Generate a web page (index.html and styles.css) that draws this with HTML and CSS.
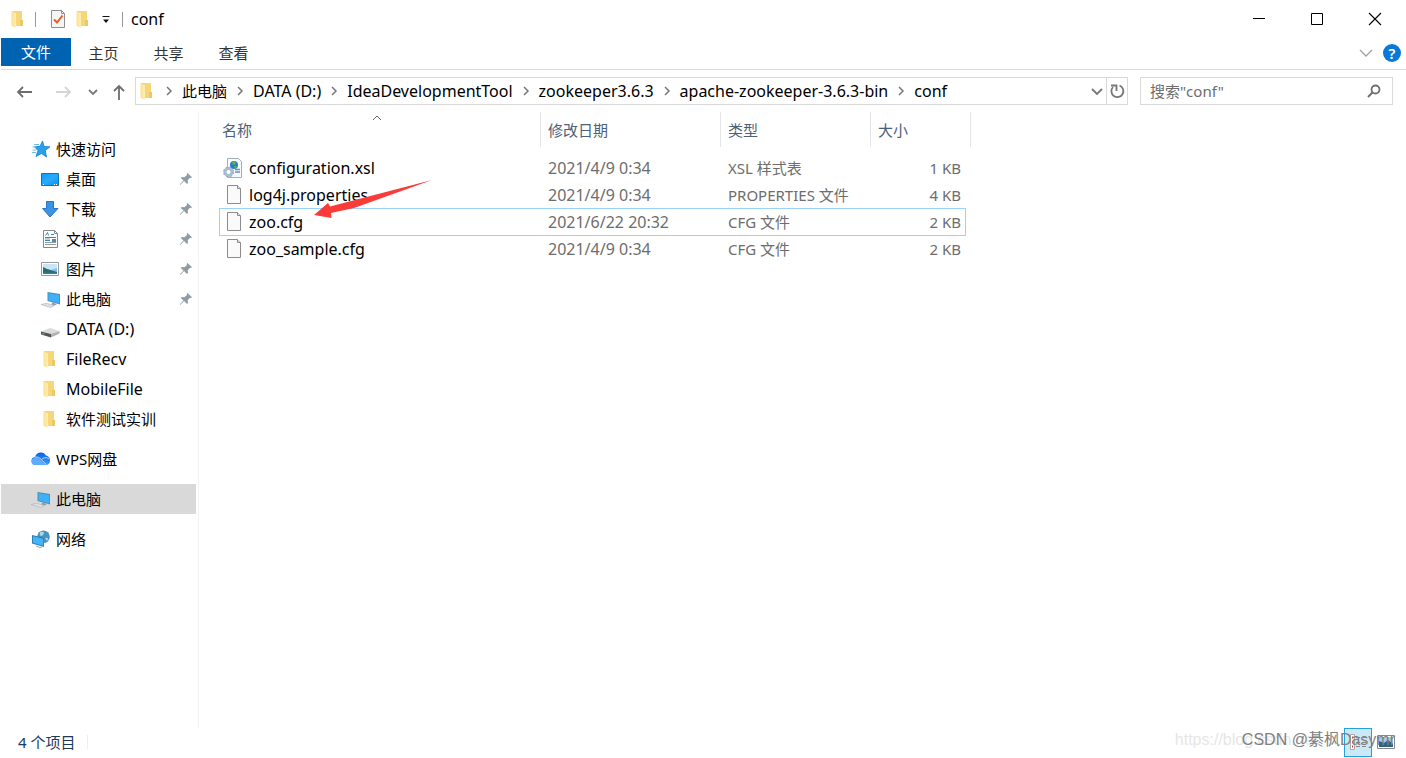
FILE: index.html
```
<!DOCTYPE html>
<html lang="zh-CN">
<head>
<meta charset="utf-8">
<title>conf</title>
<link rel="stylesheet" href="styles.css">
</head>
<body>
<svg class="defs" aria-hidden="true">
  <defs>
    <linearGradient id="fold" x1="0" x2="1"><stop offset="0" stop-color="#fbe08f"/><stop offset="1" stop-color="#ffeeb5"/></linearGradient>
    <linearGradient id="blue" x1="0" y1="0" x2="1" y2="1"><stop offset="0" stop-color="#0c9bfa"/><stop offset=".5" stop-color="#2aa9fb"/><stop offset="1" stop-color="#0793f5"/></linearGradient>
    <linearGradient id="cloud" x1="0" y1="0" x2="0" y2="1"><stop offset="0" stop-color="#0a62e8"/><stop offset="1" stop-color="#3c9dff"/></linearGradient>
  </defs>
  <symbol id="folder" viewBox="0 0 18 18"><path d="M3 1h10v9l1 1v5H3z" fill="#f5d679"/><path d="M11 10h3v6h-3z" fill="#eec863"/><path d="M2.500 1L7 3.500V17.500L2.500 16z" fill="url(#fold)"/></symbol>
  <symbol id="pin" viewBox="0 0 14 14"><path d="M8.500 1 13 5.200 12 6l-1-.2-2.300 2.400.3 2.700-1 1-2.900-2.800L1.700 12.500.8 13l.4-.9 3.300-3.500-2.700-2.700 1-.9 2.700.2L8 2.900 7.700 1.800z" fill="#8f9ba5"/></symbol>
  <symbol id="pc" viewBox="0 0 20 18"><path d="M6.500 2l12.500 2v10.500L6.500 11z" fill="#4d8fb5"/><path d="M7.500 3.200L18.200 5v8.300L7.500 10.200z" fill="#3fb0fb"/><path d="M11 12.500l5 1.400-2.500 1.600-3-.8" fill="#8d9aa3"/><path d="M0 14.500l5.500-1.200 8 2.200-4 2z" fill="#dde0e4" stroke="#a9b2ba" stroke-width=".6"/></symbol>
  <symbol id="file" viewBox="0 0 20 20"><path d="M4.500.5h10l3 3v15h-13z" fill="#fafafa" stroke="#8c8c8c"/><path d="M14.500.5v3h3" fill="#e8e8e8" stroke="#8c8c8c"/></symbol>
  <symbol id="chev" viewBox="0 0 8 10"><path d="M2 1l4 4-4 4" fill="none" stroke="#777" stroke-width="1.500"/></symbol>
</svg>
<div class="window">
  <header class="titlebar">
    <svg class="i18"><use href="#folder"/></svg>
    <span class="divider"></span>
    <button class="quick check" aria-label="属性"><svg class="i18" viewBox="0 0 18 18"><path d="M2.500.5h10l3 3v14h-13z" fill="#f5f5f5" stroke="#8e8e8e"/><path d="M12.500.5v3h3" fill="none" stroke="#8e8e8e"/><path d="M5 9.500l3 3 5.500-7" fill="none" stroke="#ee5a22" stroke-width="2"/></svg></button>
    <button class="quick" aria-label="新建文件夹"><svg class="i18"><use href="#folder"/></svg></button>
    <button class="quick more" aria-label="自定义"><svg width="8" height="10" viewBox="0 0 8 10"><path d="M.5 2.500h7" stroke="#111"/><path d="M1 5.500h6L4 9z" fill="#111"/></svg></button>
    <span class="divider"></span>
    <h1>conf</h1>
    <div class="controls">
      <button aria-label="最小化"><svg width="14" height="14"><path d="M1 6.500h12" stroke="#000"/></svg></button>
      <button aria-label="最大化"><svg width="14" height="14"><path d="M1.500 1.500h11v11h-11z" stroke="#000" fill="none"/></svg></button>
      <button aria-label="关闭"><svg width="14" height="14"><path d="M1 1l12 12M13 1L1 13" stroke="#000" stroke-width="1.100"/></svg></button>
    </div>
  </header>
  <nav class="ribbon">
    <button class="active">文件</button>
    <button>主页</button>
    <button>共享</button>
    <button>查看</button>
    <div class="help">
      <button aria-label="展开功能区"><svg width="14" height="8"><path d="M1 1l6 6 6-6" stroke="#a0a0a0" stroke-width="1.300" fill="none"/></svg></button>
      <button class="q" aria-label="帮助">?</button>
    </div>
  </nav>
  <div class="address">
    <button class="nav back" aria-label="后退"><svg width="18" height="14"><path d="M7 2L2 7l5 5M2 7h14" fill="none" stroke="#6e6e6e" stroke-width="1.800"/></svg></button>
    <button class="nav forward" aria-label="前进"><svg width="18" height="14"><path d="M11 2l5 5-5 5M16 7H2" fill="none" stroke="#d5d5d5" stroke-width="1.800"/></svg></button>
    <button class="nav recent" aria-label="最近位置"><svg width="10" height="8"><path d="M1 2l4 4 4-4" fill="none" stroke="#777" stroke-width="1.800"/></svg></button>
    <button class="nav up" aria-label="上移"><svg width="14" height="16"><path d="M2 7l5-5 5 5M7 2v14" fill="none" stroke="#6e6e6e" stroke-width="1.800"/></svg></button>
    <div class="path">
      <svg class="i18"><use href="#folder"/></svg>
      <svg class="chev"><use href="#chev"/></svg><button>此电脑</button>
      <svg class="chev"><use href="#chev"/></svg><button class="latin">DATA (D:)</button>
      <svg class="chev"><use href="#chev"/></svg><button class="latin">IdeaDevelopmentTool</button>
      <svg class="chev"><use href="#chev"/></svg><button class="latin">zookeeper3.6.3</button>
      <svg class="chev"><use href="#chev"/></svg><button class="latin">apache-zookeeper-3.6.3-bin</button>
      <svg class="chev"><use href="#chev"/></svg><button class="latin">conf</button>
      <button class="drop" aria-label="历史"><svg width="12" height="8"><path d="M1 2l5 5 5-5" fill="none" stroke="#777" stroke-width="1.800"/></svg></button>
      <button class="refresh" aria-label="刷新"><svg width="16" height="16"><path d="M10.500 2.500A6 6 0 1 1 4 4" fill="none" stroke="#777" stroke-width="1.800"/><path d="M2 2.500h5.500V8" fill="none" stroke="#777" stroke-width="1.800"/></svg></button>
    </div>
    <div class="search">
      <input type="text" placeholder='搜索"conf"' aria-label="搜索">
      <svg width="14" height="14"><circle cx="8.500" cy="5.500" r="4" fill="none" stroke="#6e6e6e" stroke-width="1.800"/><path d="M5.500 8.500L1 13" stroke="#6e6e6e" stroke-width="2"/></svg>
    </div>
  </div>
  <div class="body">
    <aside class="tree">
      <ul>
        <li><svg class="i20" viewBox="0 0 20 18"><path d="M11.500 1l1.600 5.500 5.900.3-4.700 3.700L15.500 17 10.500 13.500 5 16.500l2-6L3.500 6.800l5.500-.5z" fill="#27a0ee" stroke="#167fc4" stroke-width=".8"/><path d="M3 4.500h5M1.500 7h4M1.500 10h4M1 12.500h4" stroke="#6fbdf0"/></svg><span>快速访问</span></li>
        <li class="sub"><svg class="i20" viewBox="0 0 20 18"><path d="M.5 3.500h17v12H.5z" fill="url(#blue)" stroke="#0d74ba"/><path d="M2 14.500h15" stroke="#fff" stroke-dasharray="1 10 1 1"/></svg><span>桌面</span><svg class="pin"><use href="#pin"/></svg></li>
        <li class="sub"><svg class="i20" viewBox="0 0 20 18"><path d="M5.500 1.500h7v7H17L9 17 1.500 8.500h4z" fill="#3b94e3" stroke="#2a76c4"/></svg><span>下载</span><svg class="pin"><use href="#pin"/></svg></li>
        <li class="sub"><svg class="i20" viewBox="0 0 20 18"><path d="M2.500.5h11l3 3v14h-14z" fill="#fff" stroke="#888"/><path d="M13.500.5v3h3" fill="none" stroke="#888"/><path d="M4 7.500h11M4 10.500h5M10 4.500h3" stroke="#268bd2"/><path d="M4.500 5.500l2-3 1 3" fill="none" stroke="#268bd2"/><path d="M4 9h5M4 12.500h11M4 14.500h11" stroke="#999"/><path d="M11 9h4v3h-4z" fill="#4691b5"/></svg><span>文档</span><svg class="pin"><use href="#pin"/></svg></li>
        <li class="sub"><svg class="i20" viewBox="0 0 20 18"><path d="M.5 2.500h17v13H.5z" fill="#fff" stroke="#999"/><path d="M2 4h14v10H2z" fill="#7cc1f0"/><path d="M2 4h14v4l-6 2-8-2z" fill="#c7e4f8"/><path d="M2 7l4 2 10 3v2H2z" fill="#316b65"/><path d="M2 12.500h14V14H2z" fill="#2d7bb4"/></svg><span>图片</span><svg class="pin"><use href="#pin"/></svg></li>
        <li class="sub"><svg class="i20"><use href="#pc"/></svg><span>此电脑</span><svg class="pin"><use href="#pin"/></svg></li>
        <li class="sub"><svg class="i20" viewBox="0 0 20 18"><path d="M0 11.500L9 8l9.500 3-8.500 3z" fill="#dcdcdc"/><path d="M0 11.500l10 2.500v3.500L0 14.500z" fill="#555"/><path d="M10 14l8.500-3v2.500L10 17.500z" fill="#b0b0b0"/><path d="M1.500 13.500l2 .6" stroke="#51d27f"/></svg><span class="latin">DATA (D:)</span></li>
        <li class="sub"><svg class="i20 fold"><use href="#folder"/></svg><span class="latin">FileRecv</span></li>
        <li class="sub"><svg class="i20 fold"><use href="#folder"/></svg><span class="latin">MobileFile</span></li>
        <li class="sub"><svg class="i20 fold"><use href="#folder"/></svg><span>软件测试实训</span></li>
      </ul>
      <ul><li><svg class="i20" viewBox="0 0 20 18"><path d="M4 7a6 6 0 0 1 11-1.500A5 5 0 0 1 16 15H5a4 4 0 0 1-1-8z" fill="url(#cloud)"/><path d="M.5 11.500C1 8 5 6.500 8 8.500l7 6.500H4.500c-2.500 0-4-1.500-4-3.500z" fill="#5eacff"/><path d="M4 7.200c3-.8 5 1 6 2l5.500 5.500M10.500 9.500c2-2 5-2.500 7.500-1" stroke="#e8f3ff" stroke-width=".7" fill="none"/></svg><span>WPS网盘</span></li></ul>
      <ul><li class="selected"><svg class="i20"><use href="#pc"/></svg><span>此电脑</span></li></ul>
      <ul><li><svg class="i20" viewBox="0 0 20 18"><circle cx="12.500" cy="6.800" r="6.300" fill="#4b93bd"/><path d="M9 2c4-1 5 1 3 3s-4 1-3-3M14 8c3-1 4 1 2 3z" fill="#a7d7e9"/><path d="M1 5l12 2.800V17L1 13.500z" fill="#2d7fb3"/><path d="M2 6.200l10.200 2.500v7L2 12.700z" fill="#42b4fb"/><path d="M5 16l4 1.500 2-.5" stroke="#9aa5ad" fill="none"/></svg><span>网络</span></li></ul>
    </aside>
    <main>
      <table>
        <colgroup><col class="c-name"><col class="c-date"><col class="c-type"><col class="c-size"></colgroup>
        <thead><tr><th>名称<svg class="sort" width="10" height="6"><path d="M1 5l4-4 4 4" stroke="#666" fill="none"/></svg></th><th>修改日期</th><th>类型</th><th>大小</th></tr></thead>
        <tbody>
          <tr><td><div class="name"><svg class="ficon" viewBox="0 0 20 20"><path d="M4.500.5h11l3 3v16h-14z" fill="#f6f9fd" stroke="#a5adb8"/><circle cx="11" cy="7" r="4" fill="#2c78d0"/><path d="M9 4l3-1 1 3-3 1zM11 8l3 0-2 3z" fill="#52b848"/><path d="M12 14h5M12 11.500h5" stroke="#7087c7" stroke-width="1.500"/><circle cx="5.500" cy="14" r="3.500" fill="#fff" stroke="#a6bdd4" stroke-width="3"/><circle cx="5.500" cy="14" r="5" fill="none" stroke="#8ba6c0" stroke-width="1" stroke-dasharray="2 2"/></svg>configuration.xsl</div></td><td class="latin">2021/4/9 0:34</td><td>XSL 样式表</td><td>1 KB</td></tr>
          <tr><td><div class="name"><svg class="ficon"><use href="#file"/></svg>log4j.properties</div></td><td class="latin">2021/4/9 0:34</td><td>PROPERTIES 文件</td><td>4 KB</td></tr>
          <tr class="focused"><td><div class="name"><svg class="ficon"><use href="#file"/></svg>zoo.cfg</div></td><td class="latin">2021/6/22 20:32</td><td>CFG 文件</td><td>2 KB</td></tr>
          <tr><td><div class="name"><svg class="ficon"><use href="#file"/></svg>zoo_sample.cfg</div></td><td class="latin">2021/4/9 0:34</td><td>CFG 文件</td><td>2 KB</td></tr>
        </tbody>
      </table>
      <svg class="arrow" viewBox="0 0 118 38" aria-hidden="true"><path d="M0 35L14 23l2 3.500L118 0 40 28l-23 5 .5 5z" fill="#fb3b38"/></svg>
    </main>
  </div>
  <footer>
    <span class="count">4 个项目</span>
    <div class="views">
      <button class="on" aria-label="详细信息"><svg width="18" height="16"><path d="M1.500.5h4v15h-4z" fill="#fff" stroke="#aaa"/><path d="M3 3.500h1M3 8h1M3 12.500h1" stroke="#c33" stroke-width="2"/><path d="M7 3.500h4M13 3.500h4M7 8.500h4M13 8.500h4M7 12.500h4M13 12.500h4" stroke="#888"/></svg></button>
      <button aria-label="大图标"><svg width="18" height="14"><path d="M.5.5h17v13H.5z" fill="#fff" stroke="#888"/><path d="M2 2h14v10H2z" fill="#9fcdf0"/><path d="M2 6l5 2 4-3 5 4v3H2z" fill="#2f6480"/></svg></button>
    </div>
    <span class="mark url">https://blog.csdn.net</span>
    <span class="mark author">CSDN @綦枫Dasymr</span>
  </footer>
</div>
</body>
</html>
```
FILE: styles.css
```
* { box-sizing: border-box; }
body { margin: 0; background: #fff; color: #000; font: 15px/20px "Noto Sans", "Noto Sans CJK SC", sans-serif; }
button { margin: 0; padding: 0; border: 0; background: none; color: inherit; font: inherit; white-space: nowrap; }
svg { display: block; flex: none; }
ul { margin: 0; padding: 0; list-style: none; }
.latin { font-size: 16px; }
.defs { position: absolute; width: 0; height: 0; }
.i18 { width: 18px; height: 18px; }
.i20 { width: 20px; height: 18px; }
.window { display: flex; flex-direction: column; min-height: 100vh; padding-left: 1px; }

.titlebar { display: flex; align-items: center; height: 38px; padding-left: 8px; }
.divider { width: 1px; height: 15px; background: #999; margin: 0 8px; }
.check { margin: 0 7px 0 5px; }
.more { margin: 0 4px 0 10px; }
h1 { margin: 0; font-size: 16px; font-weight: 400; }
.controls { display: flex; margin-left: auto; padding-right: 2px; }
.controls button { display: grid; place-items: center; width: 58px; height: 38px; }

.ribbon { display: flex; align-items: flex-start; height: 32px; border-bottom: 1px solid #dadbdc; color: #333; }
.ribbon > button { width: 65px; height: 30px; }
.ribbon .active { width: 70px; height: 28px; background: #0063b1; color: #fff; }
.help { display: flex; align-items: center; gap: 10px; height: 30px; margin-left: auto; padding-right: 5px; }
.help .q { width: 18px; height: 18px; border-radius: 9px; background: #0a78d7; color: #fff; font-weight: 600; line-height: 18px; }

.address { display: flex; align-items: center; height: 42px; padding-right: 13px; }
.back { margin-left: 15px; }
.forward { margin-left: 20px; }
.recent { margin-left: 16px; }
.up { margin: 0 9px 0 14px; }
.nav { padding-top: 1px; }
.path { display: flex; align-items: center; flex: 1; min-width: 0; height: 28px; border: 1px solid #d9d9d9; padding-left: 2px; }
.path button { line-height: 26px; }
.chev { width: 8px; height: 10px; margin: 0 9px; }
.drop { margin-left: auto; padding: 0 3px; }
.refresh { height: 26px; padding: 0 2px; border-left: 1px solid #d9d9d9; }
.search { display: flex; align-items: center; width: 253px; height: 28px; margin-left: 12px; padding: 0 11px 0 9px; border: 1px solid #d9d9d9; }
.search input { flex: 1; min-width: 0; padding: 0; border: 0; outline: 0; font: inherit; }
.search input::placeholder { color: #6d6d6d; opacity: 1; }

.body { display: flex; flex: 1; }
.tree { width: 198px; padding: 22px 2px 0 0; border-right: 1px solid #f3f3f3; }
.tree ul { margin-bottom: 10px; }
.tree li { display: flex; align-items: center; gap: 5px; height: 30px; padding: 0 3px 0 30px; }
.tree .sub { padding-left: 40px; }
.fold { padding-right: 2px; }
.tree .selected { background: #d9d9d9; }
.pin { width: 14px; height: 14px; margin-left: auto; }

main { position: relative; flex: 1; padding-left: 20px; }
table { width: 752px; table-layout: fixed; border-collapse: separate; border-spacing: 0; }
.c-name { width: 322px; }
.c-date { width: 180px; }
.c-type { width: 150px; }
.c-size { width: 100px; }
th { position: relative; height: 35px; padding: 0 0 0 7px; border-right: 1px solid #e5e5e5; color: #4c607a; font-weight: 400; text-align: left; }
th:first-child { padding-left: 3px; }
thead::after { content: ""; display: block; height: 7px; }
.sort { position: absolute; top: 3px; left: calc(50% - 8px); }
tbody tr { position: relative; }
td { height: 27px; padding: 0 0 0 7px; color: #6d6d6d; white-space: nowrap; }
td:first-child { padding-left: 4px; color: #000; font-size: 16px; }
td:last-child { padding-right: 10px; text-align: right; }
.name { display: flex; align-items: center; gap: 6px; }
.ficon { width: 20px; height: 20px; }
.focused::after { content: ""; position: absolute; inset: 0 5px -1px 0; border: 1px solid #99d1ff; }
.arrow { position: absolute; left: 115px; top: 68px; width: 118px; height: 38px; }

footer { position: relative; display: flex; align-items: center; height: 30px; padding: 0 0 2px 17px; }
.count { color: #1e395b; padding-right: 12px; border-right: 1px solid #eee; line-height: 14px; }
.views { display: flex; margin-left: auto; padding-right: 6px; }
.views button { display: grid; place-items: center; width: 28px; height: 29px; }
.views .on { border: 1px solid #26a0da; background: #cbe8f6; }
.mark { position: absolute; top: 2px; white-space: nowrap; font: 16px/20px "Liberation Sans", "Noto Sans CJK SC", sans-serif; }
.url { right: 88px; color: #e6e6e6; }
.author { right: 11px; color: #808080; }
```
